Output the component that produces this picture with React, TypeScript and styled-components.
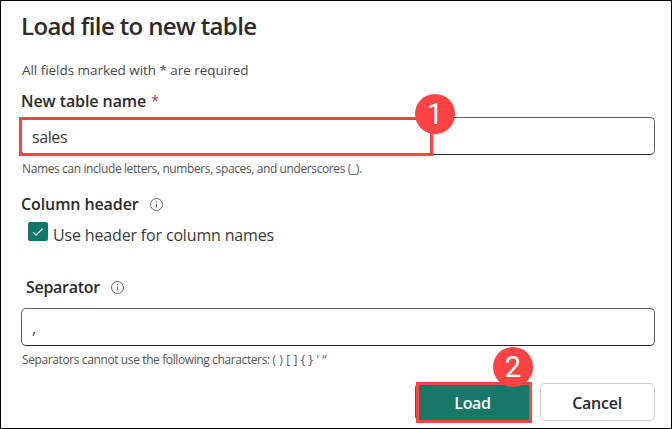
import React from "react";
import styled, { createGlobalStyle } from "styled-components";

const GlobalStyle = createGlobalStyle`
  * { box-sizing: border-box; }
  body {
    margin: 0;
    background: #fff;
    font-family: "Open Sans", "Noto Sans", sans-serif;
    color: #2b2b2b;
  }
`;

const Dialog = styled.main`
  width: 672px;
  height: 429px;
  border: 1px solid #000;
  padding: 0 16px 0 20px;
  display: flex;
  flex-direction: column;
  overflow: hidden;
  white-space: nowrap;
`;

const Title = styled.h1`
  margin: 7px 0 0;
  height: 36px;
  line-height: 36px;
  font-size: 24px;
  font-weight: 580;
  letter-spacing: -0.62px;
`;

const Note = styled.p`
  margin: 16px 0 0;
  padding-left: 1px;
  height: 20px;
  line-height: 20px;
  font-size: 13.5px;
  color: #484848;
  letter-spacing: -0.04px;
`;

const Label = styled.div<{ $top: number; $indent?: number; $gap?: number; $spacing?: number }>`
  margin-top: ${(p) => p.$top}px;
  padding-left: ${(p) => p.$indent ?? 0}px;
  height: 24px;
  display: flex;
  align-items: center;
  gap: ${(p) => p.$gap ?? 11}px;
  line-height: 24px;
  font-size: 16px;
  font-weight: 580;
  letter-spacing: ${(p) => p.$spacing ?? -0.3}px;
`;

const Required = styled.span`
  color: #bc2f32;
  font-size: 14px;
  font-weight: 400;
`;

const FieldWrap = styled.div<{ $top: number }>`
  position: relative;
  margin-top: ${(p) => p.$top}px;
  height: 38px;
`;

const Field = styled.input`
  display: block;
  width: 634px;
  height: 38px;
  padding: 2px 10px 0 10px;
  border: 1px solid #616161;
  border-bottom-color: #242424;
  border-radius: 5px;
  background: #fff;
  color: #3a3a3a;
  font: inherit;
  font-size: 16px;
  letter-spacing: -0.4px;
  outline: none;
`;

const Hint = styled.p`
  margin: 5px 0 1px;
  padding-left: 1px;
  height: 18px;
  line-height: 18px;
  font-size: 12px;
  color: #555;
  letter-spacing: -0.39px;
`;

const Characters = styled.span`
  word-spacing: 1px;
`;

const CheckRow = styled.label`
  display: flex;
  height: 27px;
  margin-top: 3px;
  padding-left: 7px;
  gap: 5px;
  line-height: 32px;
  font-size: 16px;
  color: #3a3a3a;
  letter-spacing: -0.16px;
`;

const CheckBox = styled.span`
  flex: none;
  display: flex;
  align-items: center;
  justify-content: center;
  margin-top: 3px;
  width: 20px;
  height: 19px;
  border-radius: 2px;
  background: #117865;
`;

const Actions = styled.footer`
  display: flex;
  justify-content: flex-end;
  gap: 9px;
  margin-top: 13px;
`;

const ActionWrap = styled.div`
  position: relative;
`;

const Button = styled.button<{ $primary?: boolean }>`
  display: block;
  width: ${(p) => (p.$primary ? 116 : 115)}px;
  height: 38px;
  padding: 2px 1px 0 0;
  border: 1px solid ${(p) => (p.$primary ? "#117865" : "#d1d1d1")};
  border-radius: 5px;
  background: ${(p) => (p.$primary ? "#177867" : "#fff")};
  color: ${(p) => (p.$primary ? "#fff" : "#2b2b2b")};
  font: inherit;
  font-size: 16px;
  font-weight: ${(p) => (p.$primary ? 620 : 560)};
  letter-spacing: ${(p) => (p.$primary ? -0.3 : -0.25)}px;
`;

const Highlight = styled.div<{ $x: number; $y: number; $w: number; $h: number }>`
  position: absolute;
  left: ${(p) => p.$x}px;
  top: ${(p) => p.$y}px;
  width: ${(p) => p.$w}px;
  height: ${(p) => p.$h}px;
  border: 3px solid #ff4343;
  pointer-events: none;
`;

const Badge = styled.span<{ $x: number; $y: number }>`
  position: absolute;
  left: ${(p) => p.$x}px;
  top: ${(p) => p.$y}px;
  width: 40px;
  height: 40px;
  border-radius: 50%;
  background: #ff4343;
  color: #fff;
  font-family: Roboto, sans-serif;
  font-size: 29px;
  line-height: 41px;
  text-align: center;
`;

const InfoIcon = () => (
  <svg width="13" height="13" viewBox="0 0 13 13" fill="none" stroke="#555">
    <circle cx="6.5" cy="6.5" r="6" strokeWidth="0.9" />
    <path d="M6.5 5.6V9.4" strokeWidth="0.9" />
    <circle cx="6.5" cy="3.9" r="0.6" fill="#555" stroke="none" />
  </svg>
);

const CheckIcon = () => (
  <svg width="12" height="10" viewBox="0 0 12 10" fill="none" stroke="#fff" strokeWidth="1.2">
    <path d="M1.2 5.2L4.2 8L10.6 1.6" />
  </svg>
);

export default function App() {
  return (
    <>
      <GlobalStyle />
      <Dialog>
        <Title>Load file to new table</Title>
        <Note>All fields marked with * are required</Note>
        <Label $top={9} $gap={5} $spacing={-0.08}>
          <span>New table name</span>
          <Required>*</Required>
        </Label>
        <FieldWrap $top={4}>
          <Field defaultValue="sales" />
          <Highlight $x={-2} $y={0} $w={414} $h={39} />
          <Badge $x={394} $y={-23}>1</Badge>
        </FieldWrap>
        <Hint>Names can include letters, numbers, spaces, and underscores (_).</Hint>
        <Label $top={13} $spacing={-0.1}>
          <span>Column header</span>
          <InfoIcon />
        </Label>
        <CheckRow>
          <CheckBox>
            <CheckIcon />
          </CheckBox>
          <span>Use header for column names</span>
        </CheckRow>
        <Label $top={29} $indent={5}>
          <span>Separator</span>
          <InfoIcon />
        </Label>
        <FieldWrap $top={9}>
          <Field defaultValue="," />
        </FieldWrap>
        <Hint>
          Separators cannot use the following characters: <Characters>{"( ) [ ] { } ' “"}</Characters>
        </Hint>
        <Actions>
          <ActionWrap>
            <Button $primary>Load</Button>
            <Highlight $x={1} $y={-1} $w={116} $h={41} />
            <Badge $x={78} $y={-36}>2</Badge>
          </ActionWrap>
          <Button>Cancel</Button>
        </Actions>
      </Dialog>
    </>
  );
}
